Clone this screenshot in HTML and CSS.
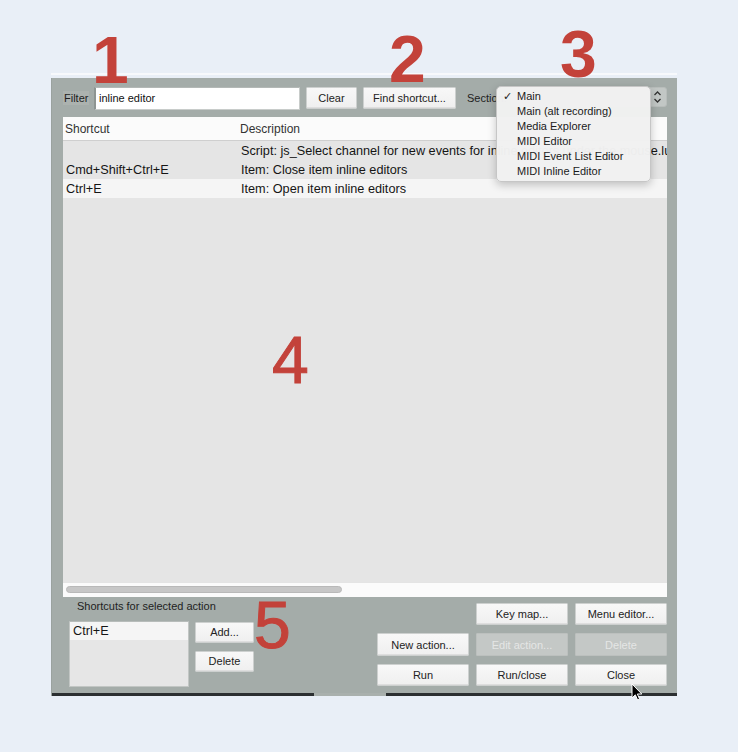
FILE: index.html
```html
<!DOCTYPE html>
<html lang="en">
<head>
<meta charset="utf-8">
<title>Actions</title>
<link rel="stylesheet" href="styles.css">
</head>
<body>
<div class="page">
  <div class="topline"></div>
  <div class="dialog">
    <div class="toolbar">
      <span class="label filter-label">Filter</span>
      <div class="input">inline editor</div>
      <button class="btn clear">Clear</button>
      <button class="btn find">Find shortcut...</button>
      <span class="label section-label">Section:</span>
      <div class="select">
        <svg class="chev" width="9" height="14" viewBox="0 0 9 14"><path d="M1.5 5 L4.5 2 L7.5 5 M1.5 9 L4.5 12 L7.5 9" fill="none" stroke="#333" stroke-width="1.3"/></svg>
      </div>
    </div>
    <div class="list">
      <div class="list-head"><div class="c1">Shortcut</div><div class="c2">Description</div></div>
      <div class="rows">
        <div class="row"><div class="c1"></div><div class="c2">Script: js_Select channel for new events for inline editors under the mouse.lua</div></div>
        <div class="row"><div class="c1">Cmd+Shift+Ctrl+E</div><div class="c2">Item: Close item inline editors</div></div>
        <div class="row selected"><div class="c1">Ctrl+E</div><div class="c2">Item: Open item inline editors</div></div>
      </div>
      <div class="hscroll"><div class="thumb"></div></div>
    </div>
    <div class="bottom">
      <div class="sel-panel">
        <div class="sel-label">Shortcuts for selected action</div>
        <div class="sel-body">
          <div class="sel-list"><div class="sel-item">Ctrl+E</div></div>
          <div class="sel-buttons">
            <button class="btn small">Add...</button>
            <button class="btn small">Delete</button>
          </div>
        </div>
      </div>
      <div class="actions">
        <div class="empty"></div>
        <button class="btn">Key map...</button>
        <button class="btn">Menu editor...</button>
        <button class="btn">New action...</button>
        <button class="btn disabled">Edit action...</button>
        <button class="btn disabled">Delete</button>
        <button class="btn">Run</button>
        <button class="btn">Run/close</button>
        <button class="btn">Close</button>
      </div>
    </div>
    <div class="footer-line"><span class="seg dark first"></span><span class="seg light"></span><span class="seg dark last"></span></div>
  </div>
</div>

<div class="menu">
  <div class="item checked"><span class="check">✓</span>Main</div>
  <div class="item">Main (alt recording)</div>
  <div class="item">Media Explorer</div>
  <div class="item">MIDI Editor</div>
  <div class="item">MIDI Event List Editor</div>
  <div class="item">MIDI Inline Editor</div>
</div>

<div class="num n1">1</div>
<div class="num n2">2</div>
<div class="num n3">3</div>
<div class="num n4">4</div>
<div class="num n5">5</div>

<svg class="cursor" width="12" height="19" viewBox="0 0 12 19"><path d="M1 1 L1 15 L4.3 11.8 L6.6 17 L8.6 16.1 L6.4 11 L10.8 11 Z" fill="#000" stroke="#fff" stroke-width="1"/></svg>
</body>
</html>
```

FILE: styles.css
```css
* { box-sizing: border-box; }
html, body { margin: 0; padding: 0; }
body {
  background: #e9eff7;
  font-family: "Liberation Sans", Arial, sans-serif;
  width: 738px;
  height: 752px;
  overflow: hidden;
  position: relative;
}
.page { padding: 73px 0 0 51px; }
.topline { width: 626px; height: 2px; background: #f7f9fc; margin-bottom: 3px; }
.dialog {
  width: 626px;
  height: 618px;
  background: #a4aca9;
  padding: 9px 10px 0 11px;
  display: flex;
  flex-direction: column;
  border-left: 1px solid #9aa29f;
}
.toolbar { display: flex; align-items: flex-start; height: 23px; padding-left: 0; }
.label { font-size: 11px; color: #1e1e1e; line-height: 14px; }
.filter-label { margin-top: 4px; padding: 0 1px; background: #acb2af; width: 26px; }
.input {
  margin-left: 5px;
  width: 206px; height: 23px;
  background: #fff;
  border: 1px solid #c8ccca;
  border-left: 2px solid #8e9592;
  border-top: 1px solid #b3b8b6;
  font-size: 11px; line-height: 14px; color: #111;
  padding: 3px 0 0 3px;
}
.btn {
  font-family: "Liberation Sans", Arial, sans-serif;
  font-size: 11px; color: #222;
  background: linear-gradient(#f8f8f8, #efefef);
  border: 1px solid #cdd0cf;
  box-shadow: inset 0 -1px 0 #dedede;
  height: 22px; padding: 0; margin: 0;
  line-height: 20px;
  border-radius: 1px;
}
.clear { margin-left: 6px; width: 51px; }
.find { margin-left: 6px; width: 93px; }
.section-label { margin-left: 11px; margin-top: 4px; }
.select {
  flex: 1; margin-left: 4px; height: 20px;
  background: #c2c7c5; border: 1px solid #b8bdbb; border-radius: 3px;
  display: flex; justify-content: flex-end; align-items: center; padding-right: 4px;
}
.chev { display: block; }

.list {
  margin-top: 7px;
  height: 480px;
  display: flex; flex-direction: column;
  background: #e5e5e5;
  overflow: hidden;
}
.list-head {
  height: 24px; flex: none;
  background: #fbfbfb;
  border-bottom: 1px solid #cfcfcf;
  display: flex; align-items: center;
  font-size: 12px; color: #333;
}
.list-head .c1 { width: 175px; padding-left: 2px; }
.list-head .c2 { padding-left: 2px; }
.rows { flex: 1; background: #e5e5e5; }
.row {
  height: 19px; display: flex; align-items: center;
  font-size: 12.7px; color: #151515; white-space: nowrap; overflow: hidden;
}
.row .c1 { width: 175px; flex: none; padding-left: 3px; }
.row .c2 { padding-left: 3px; }
.row.selected { background: #f5f5f5; }
.hscroll { height: 15px; flex: none; background: #fbfbfb; border-top: 1px solid #e4e4e4; position: relative; }
.thumb {
  margin: 3px 0 0 3px; width: 276px; height: 7px;
  background: #c7c7c7; border: 1px solid #b9b9b9; border-radius: 4px;
}

.bottom { height: 96px; flex: none; display: flex; }
.sel-panel { margin-left: 6px; width: 185px; }
.sel-label {
  font-size: 11px; color: #1e1e1e; line-height: 13px;
  margin-top: 3px; padding-left: 8px;
}
.sel-body { display: flex; margin-top: 8px; }
.sel-list {
  width: 120px; height: 66px;
  background: #e6e6e6;
  border: 1px solid #c2c6c4;
  border-top-color: #b7bcba;
}
.sel-item { height: 18px; background: #f5f5f5; font-size: 12.7px; color: #151515; line-height: 18px; padding-left: 3px; }
.sel-buttons { margin-left: 6px; display: flex; flex-direction: column; gap: 8px; padding-top: 1px; }
.btn.small { width: 59px; height: 21px; line-height: 19px; }

.actions {
  margin-left: auto;
  margin-top: 6px;
  display: grid;
  grid-template-columns: 92px 92px 92px;
  grid-template-rows: 22px 23px 22px;
  column-gap: 7px;
  row-gap: 8px;
}
.actions .btn { width: 92px; height: 100%; }
.btn.disabled { background: #c4c8c6; color: #e4e6e5; border-color: #bcc0be; box-shadow: none; }

.footer-line { display: flex; height: 3px; margin: 0 -10px 0 -11px; }
.seg.dark { background: #2b2f31; }
.seg.first { width: 262px; }
.seg.light { width: 72px; background: #a9b0ad; }
.seg.last { flex: 1; }

.menu {
  position: absolute; left: 496px; top: 86px;
  width: 155px; height: 96px;
  background: rgba(241,241,241,0.98);
  border: 1px solid #c6c6c6;
  border-radius: 5px;
  box-shadow: 0 3px 9px rgba(0,0,0,0.22);
  padding-top: 2px;
}
.item { position: relative; font-size: 11px; line-height: 15px; color: #1b1b1b; padding-left: 20px; }
.check { position: absolute; left: 6px; top: 0; font-family: "DejaVu Sans", sans-serif; font-size: 11px; font-weight: 700; color: #222; }

.num {
  position: absolute;
  font-family: "Liberation Sans", Arial, sans-serif;
  font-size: 66px; line-height: 1;
  color: #c3423a;
}
.n1 { left: 92px; top: 27px; font-weight: 700; }
.n2 { left: 389px; top: 26px; font-weight: 700; }
.n3 { left: 560px; top: 21px; font-weight: 700; }
.n4 { left: 272px; top: 327px; -webkit-text-stroke: 1px #c3423a; }
.n5 { left: 254px; top: 592px; -webkit-text-stroke: 1px #c3423a; }

.cursor { position: absolute; left: 631px; top: 683px; }
```
